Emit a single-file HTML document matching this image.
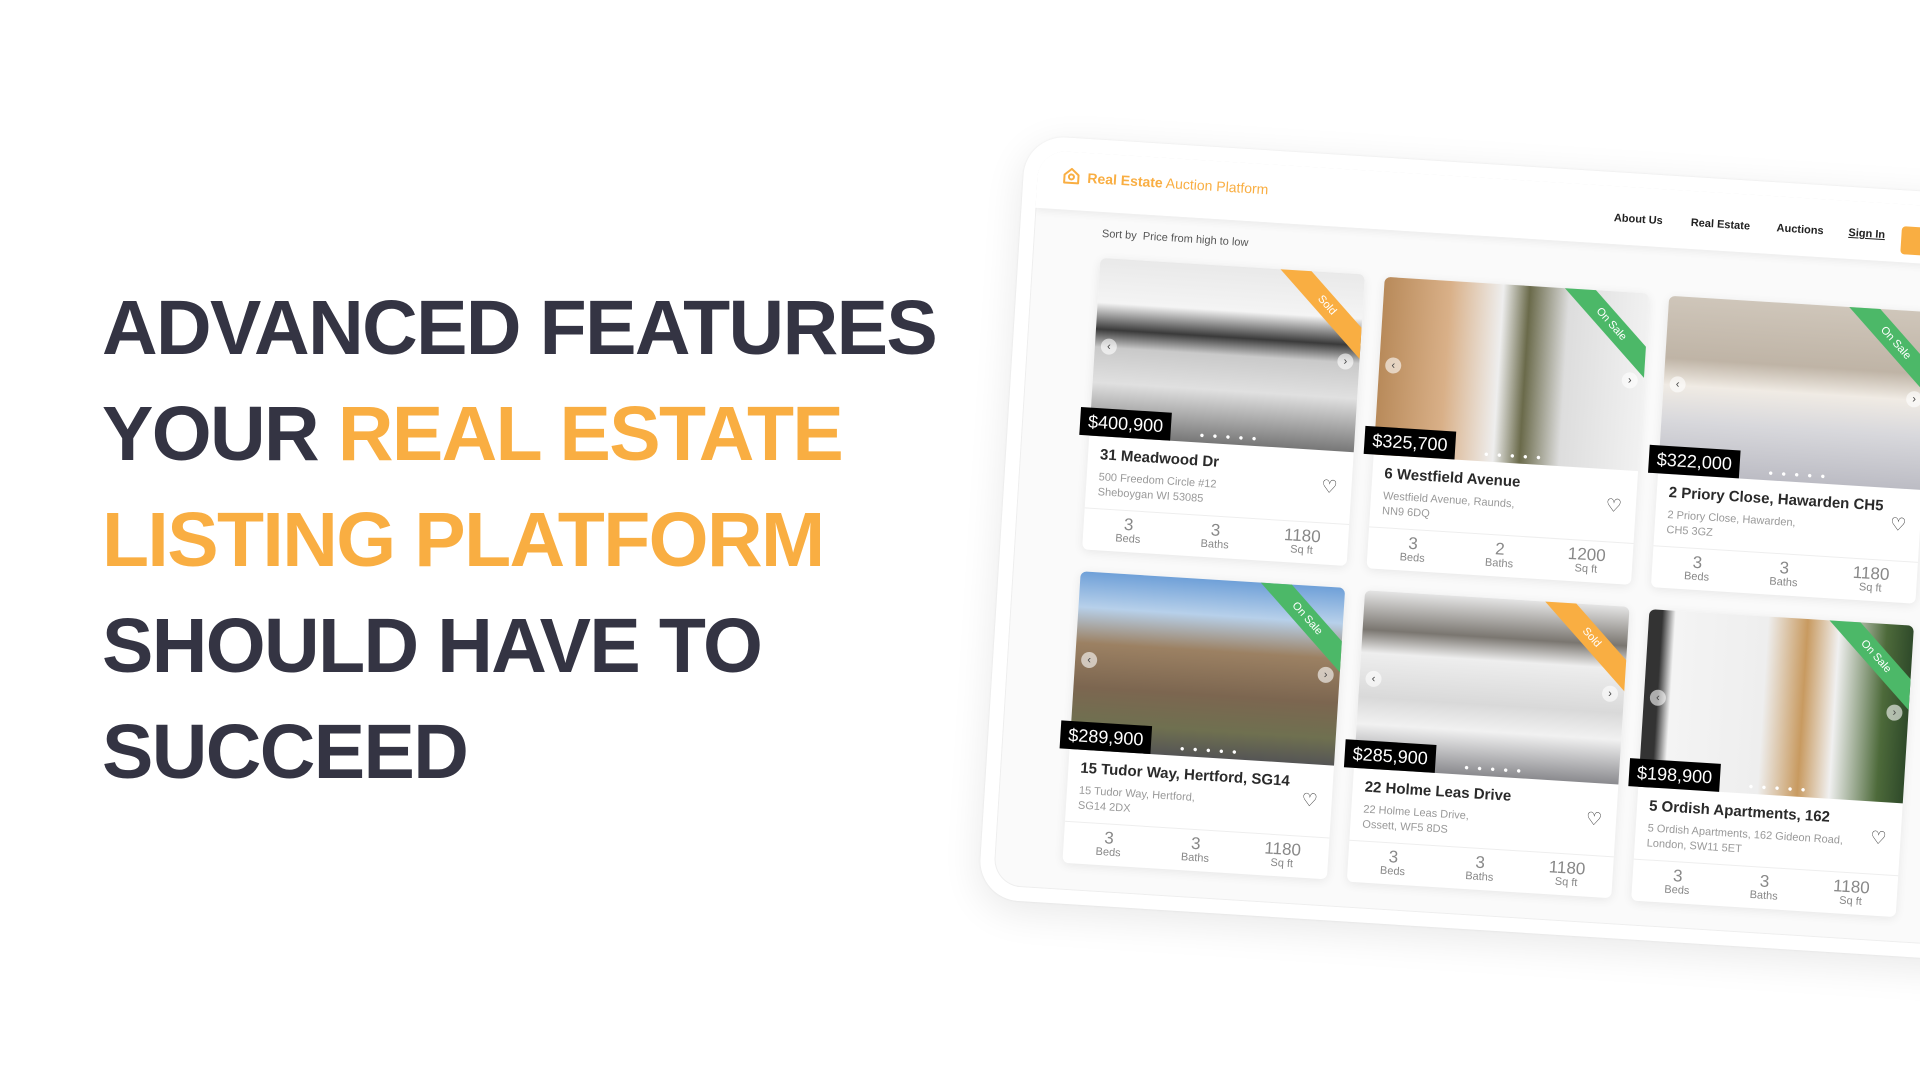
<!DOCTYPE html>
<html><head><meta charset="utf-8"><style>
*{margin:0;padding:0;box-sizing:border-box}
body{width:1920px;height:1080px;background:#fff;overflow:hidden;position:relative;font-family:"Liberation Sans",sans-serif}
.head{position:absolute;left:102px;top:275px;font-weight:bold;font-size:77px;line-height:106px;color:#343443;letter-spacing:-1.6px;white-space:nowrap}
.o{color:#f9ae42}
.tab{position:absolute;left:1026px;top:135px;width:1150px;height:765px;background:#fff;border-radius:40px;transform-origin:0 0;transform:rotate(3.6deg);box-shadow:0 10px 40px rgba(0,0,0,.09),0 0 2px rgba(0,0,0,.08)}
.scr{position:absolute;left:14px;top:14px;right:0;bottom:14px;background:#fafafa;border-radius:28px 0 0 28px;overflow:hidden;box-shadow:inset 0 0 0 1px #eee}
.hdr{position:absolute;left:0;top:0;right:0;height:58px;background:#fff;box-shadow:0 3px 8px rgba(0,0,0,.06)}
.logo{position:absolute;left:24px;top:14px;color:#f9ae42;font-size:14px;white-space:nowrap}
.logo b{margin-left:6px}
.nav{position:absolute;top:26px;font-size:11px;font-weight:bold;color:#222}
.btn{position:absolute;top:22px;width:60px;height:28px;background:#f9ae42;border-radius:4px}
.sort{position:absolute;left:68px;top:74px;font-size:11px;color:#555}
.card{position:absolute;width:265px;height:292px;background:#fff;border-radius:6px;box-shadow:0 2px 10px rgba(0,0,0,.08)}
.img{position:absolute;left:0;top:0;width:265px;height:178px;border-radius:6px 6px 0 0;overflow:hidden}
.rib{position:absolute;right:-34px;top:22px;width:140px;height:22px;transform:rotate(45deg);color:#fff;font-size:11px;text-align:center;line-height:22px}
.price{position:absolute;left:-10px;top:150px;background:#000;color:#fff;font-size:18px;padding:3px 8px;line-height:22px}
.dots{position:absolute;left:110px;top:166px;font-size:8px;color:#fff;letter-spacing:3px}
.arr{position:absolute;top:80px;width:16px;height:16px;border-radius:50%;background:rgba(255,255,255,.6);font-size:11px;line-height:16px;text-align:center;color:#444}
.t{position:absolute;left:12px;top:188px;font-size:15px;font-weight:bold;color:#2a2a2a}
.a{position:absolute;left:12px;top:212px;font-size:11px;color:#999;line-height:15px}
.hrt{position:absolute;right:14px;top:204px;font-size:18px;color:#333}
.ln{position:absolute;left:0;right:0;top:250px;border-top:1px solid #eee}
.st{position:absolute;top:256px;width:70px;text-align:center;color:#888;font-size:17px;line-height:17px}
.st small{display:block;font-size:11px;line-height:13px}
</style></head><body>
<div class="head">ADVANCED FEATURES<br>YOUR <span class="o">REAL ESTATE</span><br><span class="o">LISTING PLATFORM</span><br>SHOULD HAVE TO<br>SUCCEED</div>

<div class="tab"><div class="scr">
<div class="hdr">
<div class="logo"><svg width="20" height="20" viewBox="0 0 20 20" style="vertical-align:-4px"><path d="M3 9 L10 3 L17 9 V17 H3 Z" fill="none" stroke="#f9ae42" stroke-width="2" stroke-linejoin="round"/><circle cx="10" cy="11" r="2.5" fill="none" stroke="#f9ae42" stroke-width="2"/></svg><b>Real Estate</b> Auction Platform</div>
<div class="nav" style="left:578px">About Us</div>
<div class="nav" style="left:655px">Real Estate</div>
<div class="nav" style="left:741px">Auctions</div>
<div class="nav" style="left:813px;text-decoration:underline">Sign In</div>
<div class="btn" style="left:866px"></div>
</div>
<div class="sort">Sort by &nbsp;Price from high to low</div>

<div class="card" style="left:68px;top:104px">
<div class="img" style="background:linear-gradient(180deg,#e9e9e9 0%,#f4f4f4 25%,#3a3a3a 40%,#c9c9c9 50%,#e0e0e0 70%,#777 100%)"><div class="rib" style="background:#f9ae42">Sold</div><div class="arr" style="left:6px">‹</div><div class="arr" style="right:6px">›</div><div class="dots">● ● ● ● ●</div></div>
<div class="price">$400,900</div>
<div class="t">31 Meadwood Dr</div><div class="a">500 Freedom Circle #12<br>Sheboygan WI 53085</div><div class="hrt">♡</div><div class="ln"></div>
<div class="st" style="left:10px">3<small>Beds</small></div><div class="st" style="left:97px">3<small>Baths</small></div><div class="st" style="left:184px">1180<small>Sq ft</small></div></div>

<div class="card" style="left:353px;top:105px">
<div class="img" style="background:linear-gradient(90deg,#b88a5a 0%,#d9b088 25%,#eee 45%,#6a6a4a 55%,#ddd 70%,#f1f1f1 100%)"><div class="rib" style="background:#4cb868">On Sale</div><div class="arr" style="left:6px">‹</div><div class="arr" style="right:6px">›</div><div class="dots">● ● ● ● ●</div></div>
<div class="price">$325,700</div>
<div class="t">6 Westfield Avenue</div><div class="a">Westfield Avenue, Raunds,<br>NN9 6DQ</div><div class="hrt">♡</div><div class="ln"></div>
<div class="st" style="left:10px">3<small>Beds</small></div><div class="st" style="left:97px">2<small>Baths</small></div><div class="st" style="left:184px">1200<small>Sq ft</small></div></div>

<div class="card" style="left:638px;top:106px">
<div class="img" style="background:linear-gradient(180deg,#cfc6ba 0%,#bfb4a6 35%,#f0ebe4 50%,#d8d8dc 70%,#bcbcc4 100%)"><div class="rib" style="background:#4cb868">On Sale</div><div class="arr" style="left:6px">‹</div><div class="arr" style="right:6px">›</div><div class="dots">● ● ● ● ●</div></div>
<div class="price">$322,000</div>
<div class="t">2 Priory Close, Hawarden CH5</div><div class="a">2 Priory Close, Hawarden,<br>CH5 3GZ</div><div class="hrt">♡</div><div class="ln"></div>
<div class="st" style="left:10px">3<small>Beds</small></div><div class="st" style="left:97px">3<small>Baths</small></div><div class="st" style="left:184px">1180<small>Sq ft</small></div></div>

<div class="card" style="left:68px;top:418px">
<div class="img" style="background:linear-gradient(180deg,#6fa0d8 0%,#b7d0ea 20%,#9c8163 40%,#7c6650 65%,#6f7050 85%,#555 100%)"><div class="rib" style="background:#4cb868">On Sale</div><div class="arr" style="left:6px">‹</div><div class="arr" style="right:6px">›</div><div class="dots">● ● ● ● ●</div></div>
<div class="price">$289,900</div>
<div class="t">15 Tudor Way, Hertford, SG14</div><div class="a">15 Tudor Way, Hertford,<br>SG14 2DX</div><div class="hrt">♡</div><div class="ln"></div>
<div class="st" style="left:10px">3<small>Beds</small></div><div class="st" style="left:97px">3<small>Baths</small></div><div class="st" style="left:184px">1180<small>Sq ft</small></div></div>

<div class="card" style="left:353px;top:419px">
<div class="img" style="background:linear-gradient(180deg,#e4e4e4 0%,#7a7670 22%,#eeeeee 35%,#d9d9d9 60%,#f1f1f1 75%,#8a8a8e 100%)"><div class="rib" style="background:#f9ae42">Sold</div><div class="arr" style="left:6px">‹</div><div class="arr" style="right:6px">›</div><div class="dots">● ● ● ● ●</div></div>
<div class="price">$285,900</div>
<div class="t">22 Holme Leas Drive</div><div class="a">22 Holme Leas Drive,<br>Ossett, WF5 8DS</div><div class="hrt">♡</div><div class="ln"></div>
<div class="st" style="left:10px">3<small>Beds</small></div><div class="st" style="left:97px">3<small>Baths</small></div><div class="st" style="left:184px">1180<small>Sq ft</small></div></div>

<div class="card" style="left:638px;top:420px">
<div class="img" style="background:linear-gradient(90deg,#333 0%,#333 5%,#f4f4f4 10%,#eee 45%,#c89a60 60%,#f0f0f0 72%,#4d6a3a 90%,#2f4a2a 100%)"><div class="rib" style="background:#4cb868">On Sale</div><div class="arr" style="left:6px">‹</div><div class="arr" style="right:6px">›</div><div class="dots">● ● ● ● ●</div></div>
<div class="price">$198,900</div>
<div class="t">5 Ordish Apartments, 162</div><div class="a">5 Ordish Apartments, 162 Gideon Road,<br>London, SW11 5ET</div><div class="hrt">♡</div><div class="ln"></div>
<div class="st" style="left:10px">3<small>Beds</small></div><div class="st" style="left:97px">3<small>Baths</small></div><div class="st" style="left:184px">1180<small>Sq ft</small></div></div>
</div></div>
</body></html>
